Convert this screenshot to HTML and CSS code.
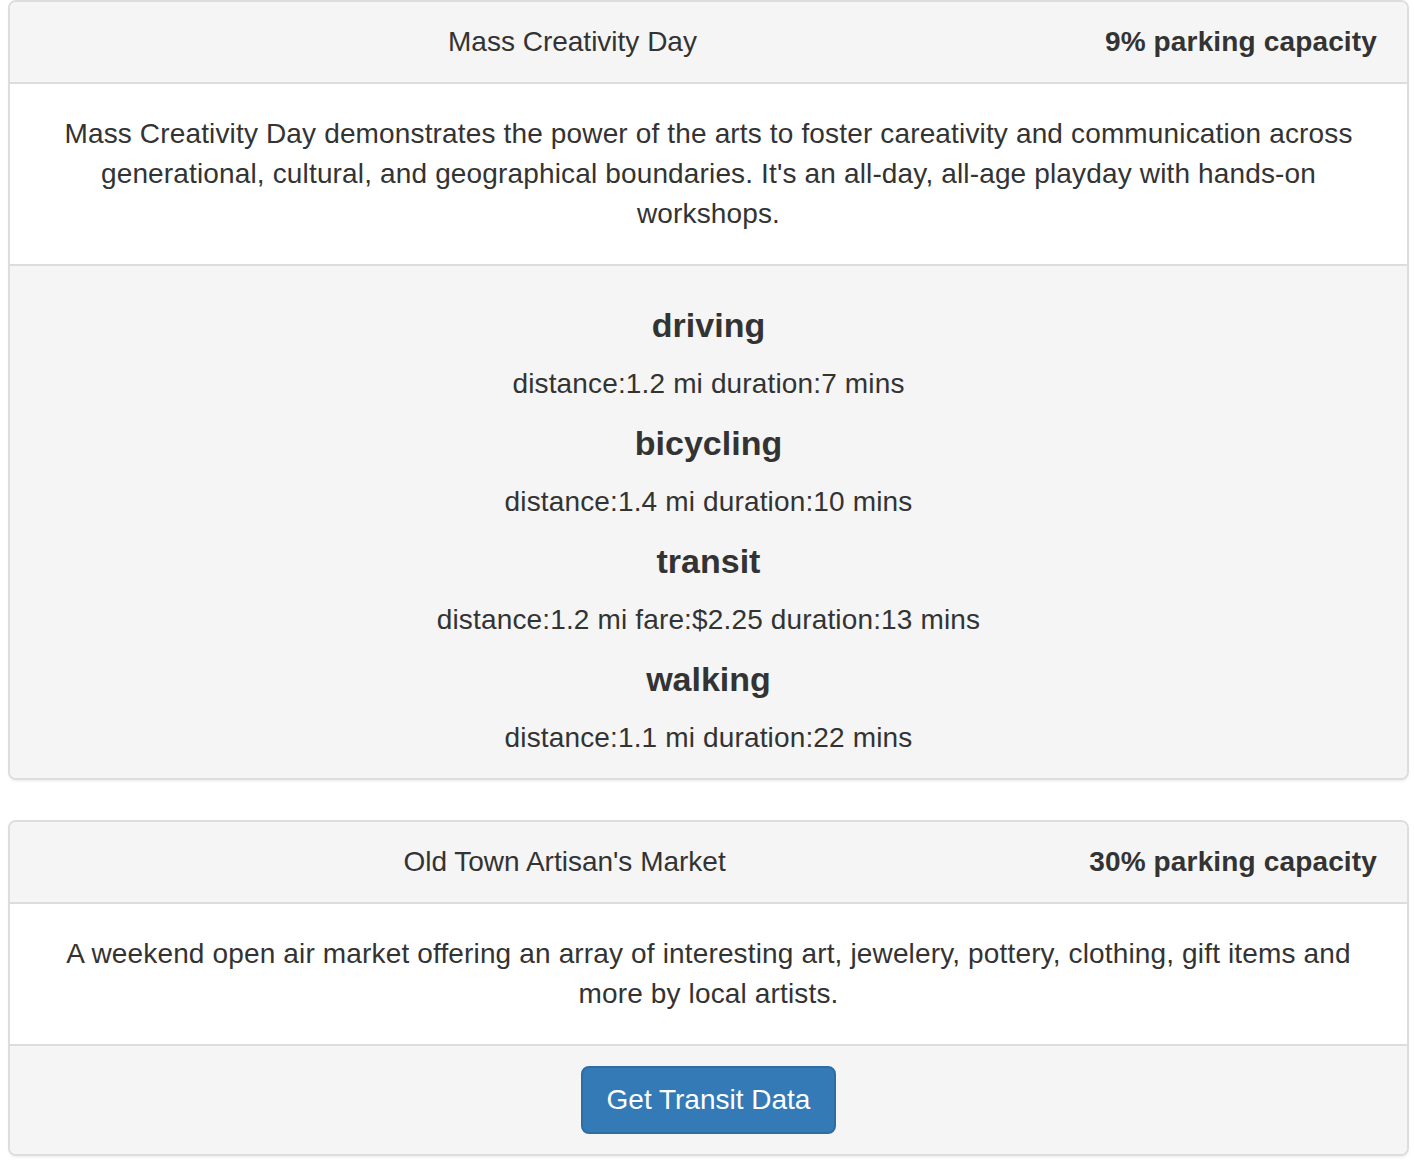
FILE: index.html
```html
<!DOCTYPE html>
<html lang="en">
<head>
<meta charset="utf-8">
<title>Events</title>
<link rel="stylesheet" href="styles.css">
</head>
<body>
<div class="page">
  <div class="panel">
    <div class="panel-heading">
      <div class="event-title">Mass Creativity Day</div>
      <div class="capacity">9% parking capacity</div>
    </div>
    <div class="panel-body">
      <p>Mass Creativity Day demonstrates the power of the arts to foster careativity and communication across generational, cultural, and geographical boundaries. It's an all-day, all-age playday with hands-on workshops.</p>
    </div>
    <div class="panel-footer">
      <h4 class="mode">driving</h4>
      <p class="stats">distance:1.2 mi duration:7 mins</p>
      <h4 class="mode">bicycling</h4>
      <p class="stats">distance:1.4 mi duration:10 mins</p>
      <h4 class="mode">transit</h4>
      <p class="stats">distance:1.2 mi fare:$2.25 duration:13 mins</p>
      <h4 class="mode">walking</h4>
      <p class="stats">distance:1.1 mi duration:22 mins</p>
    </div>
  </div>
  <div class="panel">
    <div class="panel-heading">
      <div class="event-title">Old Town Artisan's Market</div>
      <div class="capacity">30% parking capacity</div>
    </div>
    <div class="panel-body">
      <p>A weekend open air market offering an array of interesting art, jewelery, pottery, clothing, gift items and more by local artists.</p>
    </div>
    <div class="panel-footer">
      <button class="btn-primary" type="button">Get Transit Data</button>
    </div>
  </div>
</div>
</body>
</html>
```

FILE: styles.css
```css
html, body {
  margin: 0;
  padding: 0;
  background: #fff;
}
body {
  font-family: "Liberation Sans", Arial, sans-serif;
  font-size: 28px;
  line-height: 40px;
  color: #333;
}
.page {
  padding: 0 5px 0 8px;
}
.panel {
  background: #fff;
  border: 2px solid #ddd;
  border-radius: 8px;
  box-shadow: 0 2px 2px rgba(0, 0, 0, 0.05);
  margin-bottom: 40px;
  overflow: hidden;
}
.panel-heading {
  display: flex;
  align-items: center;
  padding: 20px 30px;
  background: #f5f5f5;
  border-bottom: 2px solid #ddd;
}
.event-title {
  flex: 1;
  text-align: center;
}
.capacity {
  font-weight: bold;
  letter-spacing: 0.15px;
}
.panel-body {
  padding: 30px;
  text-align: center;
}
.panel-body p {
  margin: 0;
  padding: 0 20px;
  letter-spacing: 0.15px;
}
.panel-footer {
  padding: 20px 30px;
  background: #f5f5f5;
  border-top: 2px solid #ddd;
  text-align: center;
}
.mode {
  font-size: 34px;
  line-height: 38px;
  font-weight: bold;
  margin: 20px 0;
}
.stats {
  margin: 0;
  letter-spacing: 0.15px;
}
.btn-primary {
  font-family: inherit;
  font-size: 28px;
  line-height: 40px;
  color: #fff;
  background: #337ab7;
  border: 2px solid #2e6da4;
  border-radius: 8px;
  padding: 12px 24px;
  cursor: pointer;
}
```
